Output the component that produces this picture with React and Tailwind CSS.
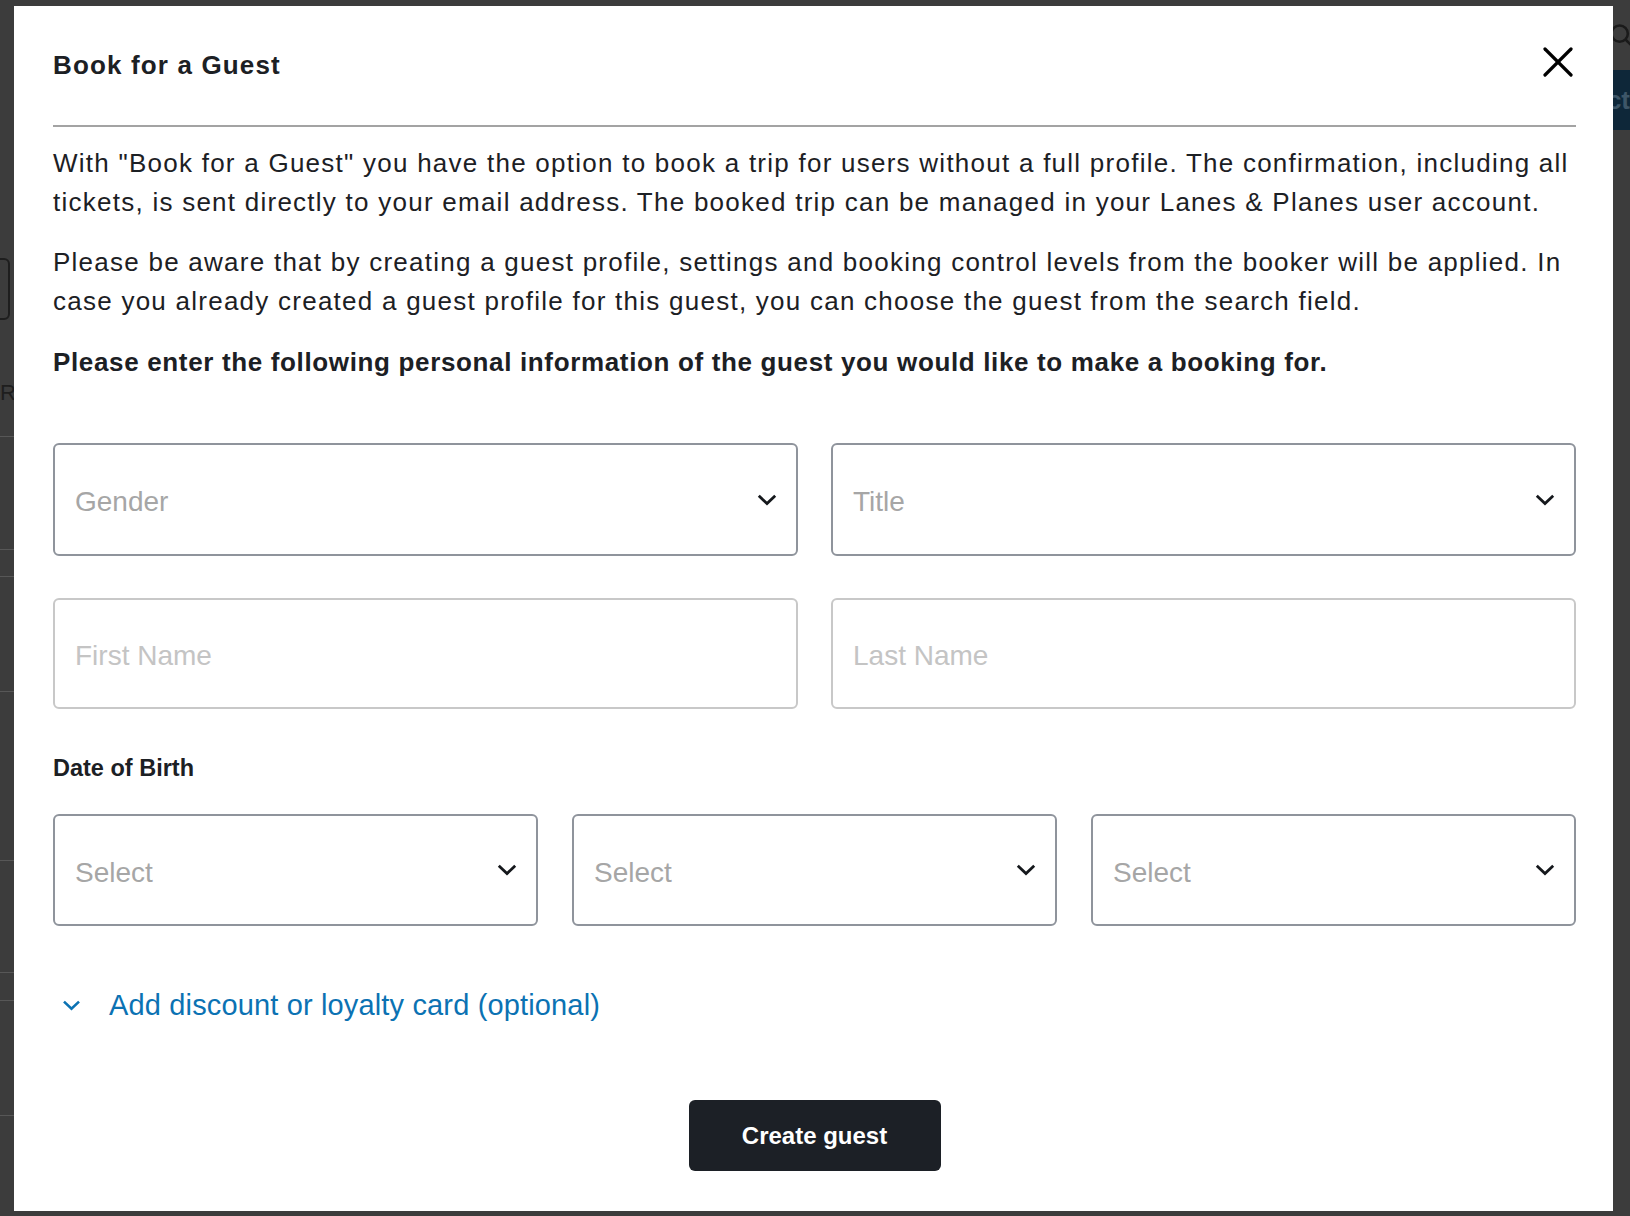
import React from 'react';

function Chevron({ className = '' }) {
  return (
    <svg viewBox="0 0 20 12" className={className} fill="none" stroke="currentColor" strokeWidth="2.8">
      <polyline points="1.8,1.8 10,9.6 18.2,1.8" />
    </svg>
  );
}

function SelectBox({ placeholder, height = 'h-[113px]' }) {
  return (
    <div className={`flex ${height} items-center justify-between rounded-[6px] border-2 border-[#8f949c] pl-[20px] pr-[19px]`}>
      <span className="pt-[5px] text-[28px] text-[#a6a6a6]">{placeholder}</span>
      <Chevron className="h-[12px] w-[20px] text-[#15181c]" />
    </div>
  );
}

function TextInput({ placeholder }) {
  return (
    <input
      placeholder={placeholder}
      className="h-[111px] w-full rounded-[6px] border-2 border-[#c8c8c8] px-[20px] pt-[4px] text-[28px] text-[#1b1f23] outline-none placeholder:text-[#c4c4c4]"
    />
  );
}

export default function App() {
  return (
    <div className="relative flex h-[1216px] w-full justify-between overflow-hidden bg-[#3c3c3c] font-['Liberation_Sans',Arial,sans-serif]">
      {/* page behind the overlay */}
      <div className="flex w-[60px] flex-col">
        <div className="ml-[-20px] mt-[258px] h-[62px] w-[30px] rounded-[6px] border-2 border-[#1e1e1e]" />
        <div className="mt-[60px] text-[22px] leading-[26px] text-[#1e1e1e]">R</div>
        <div className="mt-[30px] border-t border-[#575757]" />
        <div className="mt-[112px] border-t border-[#575757]" />
        <div className="mt-[26px] border-t border-[#575757]" />
        <div className="mt-[114px] border-t border-[#575757]" />
        <div className="mt-[168px] border-t border-[#575757]" />
        <div className="mt-[111px] border-t border-[#575757]" />
        <div className="mt-[27px] border-t border-[#575757]" />
        <div className="mt-[114px] border-t border-[#575757]" />
      </div>
      <div className="flex w-[60px] flex-col items-end">
        <svg viewBox="0 0 24 24" className="mr-[-6px] mt-[22px] h-[28px] w-[28px]" fill="none" stroke="#1a1a1a" strokeWidth="2.2">
          <circle cx="10" cy="10" r="7" />
          <line x1="15" y1="15" x2="22" y2="22" />
        </svg>
        <div className="mt-[20px] flex h-[60px] w-[60px] items-center justify-end bg-[#0e2739] text-[26px] font-bold text-[#3d5668]">
          ct
        </div>
      </div>

      {/* modal */}
      <div className="absolute left-[14px] top-[6px] flex h-[1205px] w-[1599px] flex-col bg-white pb-[40px] pl-[39px] pr-[37px] text-[#1c2024]">
        <div className="flex h-[119px] items-start justify-between pt-[43px]">
          <h2 className="text-[26px] font-bold leading-[32px] tracking-[1.15px]">Book for a Guest</h2>
          <button className="mr-[3px] mt-[-2px] h-[30px] w-[30px]" aria-label="Close">
            <svg viewBox="0 0 30 30" className="h-[30px] w-[30px]" fill="none" stroke="#000" strokeWidth="3.2" strokeLinecap="round">
              <line x1="2" y1="2" x2="28" y2="28" />
              <line x1="28" y1="2" x2="2" y2="28" />
            </svg>
          </button>
        </div>
        <div className="h-[2px] bg-[#a3a3a3]" />

        <p className="mt-[17px] text-[26px] leading-[39.5px] tracking-[1.25px]">
          With "Book for a Guest" you have the option to book a trip for users without a full profile. The confirmation, including all tickets, is sent directly to your email address. The booked trip can be managed in your Lanes &amp; Planes user account.
        </p>
        <p className="mt-[20px] text-[26px] leading-[39.5px] tracking-[1.25px]">
          Please be aware that by creating a guest profile, settings and booking control levels from the booker will be applied. In case you already created a guest profile for this guest, you can choose the guest from the search field.
        </p>
        <p className="mt-[21px] text-[26px] font-bold leading-[39.5px] tracking-[0.65px]">
          Please enter the following personal information of the guest you would like to make a booking for.
        </p>

        <div className="mt-[61px] grid grid-cols-2 gap-x-[33px] gap-y-[42px]">
          <SelectBox placeholder="Gender" />
          <SelectBox placeholder="Title" />
          <TextInput placeholder="First Name" />
          <TextInput placeholder="Last Name" />
        </div>

        <div className="mt-[45px] text-[23.5px] font-bold leading-[28px]">Date of Birth</div>
        <div className="mt-[32px] grid grid-cols-3 gap-[34px]">
          <SelectBox placeholder="Select" height="h-[112px]" />
          <SelectBox placeholder="Select" height="h-[112px]" />
          <SelectBox placeholder="Select" height="h-[112px]" />
        </div>

        <button className="mt-[61px] flex items-center self-start text-[#0b72b3]">
          <Chevron className="ml-[9px] h-[11px] w-[19px]" />
          <span className="ml-[28px] text-[29px] leading-[36px] tracking-[0.15px]">Add discount or loyalty card (optional)</span>
        </button>

        <div className="mt-[77px] flex justify-center">
          <button className="h-[71px] w-[252px] rounded-[6px] bg-[#1c2026] text-[24px] font-bold text-white">Create guest</button>
        </div>
      </div>
    </div>
  );
}
